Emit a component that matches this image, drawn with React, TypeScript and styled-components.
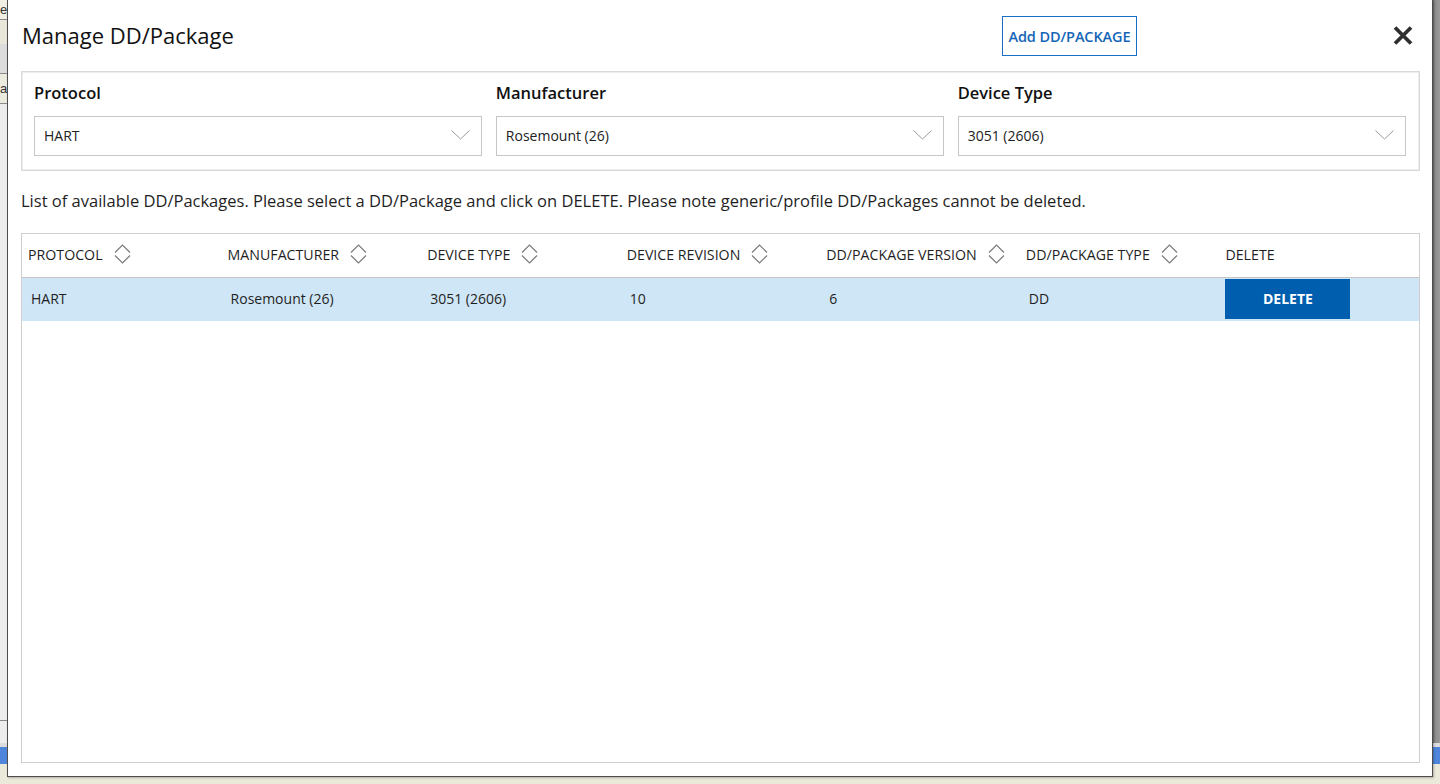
import React from "react";
import styled, { createGlobalStyle } from "styled-components";

const GlobalStyle = createGlobalStyle`
  html, body { margin: 0; padding: 0; }
  body {
    width: 1440px;
    height: 784px;
    overflow: hidden;
    font-family: "Open Sans", "Noto Sans", sans-serif;
    color: #1f1f1f;
  }
  * { box-sizing: border-box; }
`;

const Page = styled.div`
  position: relative;
  width: 1440px;
  height: 784px;
  background: #ebe9da;
  display: flex;
  flex-direction: column;
`;

const BackApp = styled.div`
  height: 743px;
  display: flex;
`;

const BackLeft = styled.div`
  width: 7px;
  background: #ededed;
  display: flex;
  flex-direction: column;
`;

const BackLeftBand = styled.div<{ $h: number; $bg: string; $line?: boolean }>`
  height: ${(p) => p.$h}px;
  background: ${(p) => p.$bg};
  border-bottom: ${(p) => (p.$line ? "1px solid #8a8a8a" : "none")};
  font: 13px "Liberation Sans", sans-serif;
  color: #333;
  line-height: ${(p) => p.$h}px;
  overflow: hidden;
`;

const BackMiddle = styled.div`
  flex: 1;
  background: #ffffff;
`;

const BackRight = styled.div`
  width: 7px;
  background: linear-gradient(90deg, #6e6e6e 0, #8c8c8c 2px, #9a9a9a 100%);
`;

const BackStrip = styled.div`
  height: 4px;
  background: #dcdcdc;
`;

const TaskBar = styled.div`
  height: 17px;
  background: #4f86dc;
`;

const Dialog = styled.div`
  position: absolute;
  left: 7px;
  top: 0;
  width: 1426px;
  height: 777px;
  background: #ffffff;
  border: 1px solid #4d4d4d;
  border-top: none;
  box-shadow: 1px 1px 2px rgba(0, 0, 0, 0.25);
  display: flex;
  flex-direction: column;
  padding: 0 12px 13px 13px;
`;

const Header = styled.div`
  height: 71px;
  display: flex;
  align-items: center;
`;

const Title = styled.h1`
  margin: 0 0 2px 1px;
  font-size: 22px;
  font-weight: 500;
  color: #111;
`;

const AddButton = styled.button`
  margin-left: auto;
  height: 40px;
  width: 135px;
  margin-top: 1px;
  padding: 0;
  background: #fff;
  border: 1px solid #1a6fc2;
  color: #1666b8;
  font-family: "Open Sans", sans-serif;
  font-size: 14.5px;
  font-weight: 600;
  letter-spacing: -0.1px;
`;

const CloseButton = styled.button`
  margin-left: 255px;
  margin-right: 6px;
  width: 22px;
  height: 22px;
  padding: 0;
  border: none;
  background: none;
  display: flex;
  align-items: center;
  justify-content: center;
`;

const FilterBox = styled.div`
  border: 1px solid #d9d9d9;
  box-shadow: inset 0 0 0 1px #ececec;
  padding: 9px 13px 14px 12px;
  display: grid;
  grid-template-columns: repeat(3, 1fr);
  column-gap: 13.5px;
`;

const Field = styled.div`
  display: flex;
  flex-direction: column;
`;

const Label = styled.label`
  font-size: 16.5px;
  font-weight: 600;
  line-height: 24px;
  margin-bottom: 11px;
  color: #111;
`;

const Select = styled.div`
  height: 40px;
  border: 1px solid #c6c6c6;
  display: flex;
  align-items: center;
  justify-content: space-between;
  padding: 0 11px 2px 9px;
  font-size: 14px;
  color: #222;
`;

const InfoText = styled.p`
  margin: 19px 0 21px 0;
  font-size: 16.5px;
  line-height: 22px;
  color: #1f1f1f;
`;

const Table = styled.div`
  flex: 1;
  border: 1px solid #cfcfcf;
  display: flex;
  flex-direction: column;
`;

const Row = styled.div<{ $head?: boolean; $selected?: boolean }>`
  display: grid;
  grid-template-columns: repeat(7, 1fr);
  height: ${(p) => (p.$head ? 44 : 43)}px;
  background: ${(p) => (p.$selected ? "#cfe6f6" : "#fff")};
  border-bottom: ${(p) => (p.$head ? "1px solid #c4c4c4" : "none")};
  align-items: center;
`;

const HeadCell = styled.div`
  display: flex;
  align-items: center;
  gap: 11px;
  padding-left: 6px;
  padding-bottom: 3px;
  font-size: 14.2px;
  color: #1f1f1f;
`;

const Cell = styled.div`
  display: flex;
  align-items: center;
  padding-left: 9px;
  padding-bottom: 2px;
  font-size: 14px;
  color: #1f1f1f;
`;

const DeleteButton = styled.button`
  margin-left: -3px;
  margin-top: 0;
  width: 125px;
  height: 40px;
  border: none;
  background: #005eae;
  color: #fff;
  font-family: "Open Sans", sans-serif;
  font-size: 14px;
  font-weight: 700;
  padding: 0;
`;

const SortIcon = () => (
  <svg width="17" height="22" viewBox="0 0 17 22" fill="none">
    <path d="M1 9.5 L8.5 2 L16 9.5" stroke="#7a7a7a" strokeWidth="1.2" />
    <path d="M1 12.5 L8.5 20 L16 12.5" stroke="#7a7a7a" strokeWidth="1.2" />
  </svg>
);

const Chevron = () => (
  <svg width="19" height="10" viewBox="0 0 19 10" fill="none">
    <path d="M0.5 0.5 L9.5 9 L18.5 0.5" stroke="#9a9a9a" strokeWidth="1" />
  </svg>
);

const CloseIcon = () => (
  <svg width="20" height="19" viewBox="0 0 20 19" fill="none">
    <path d="M2 1.5 L18 17.5 M18 1.5 L2 17.5" stroke="#2e2e2e" strokeWidth="3.8" />
  </svg>
);

const filters = [
  { label: "Protocol", value: "HART" },
  { label: "Manufacturer", value: "Rosemount (26)" },
  { label: "Device Type", value: "3051 (2606)" },
];

const columns = [
  { name: "PROTOCOL", sortable: true },
  { name: "MANUFACTURER", sortable: true },
  { name: "DEVICE TYPE", sortable: true },
  { name: "DEVICE REVISION", sortable: true },
  { name: "DD/PACKAGE VERSION", sortable: true },
  { name: "DD/PACKAGE TYPE", sortable: true },
  { name: "DELETE", sortable: false },
];

const rows = [["HART", "Rosemount (26)", "3051 (2606)", "10", "6", "DD"]];

export default function App() {
  return (
    <>
      <GlobalStyle />
      <Page>
        <BackApp>
          <BackLeft>
            <BackLeftBand $h={20} $bg="#f1efe4" $line>e</BackLeftBand>
            <BackLeftBand $h={24} $bg="#e9e7da" />
            <BackLeftBand $h={30} $bg="#dcdcdc" $line />
            <BackLeftBand $h={30} $bg="#ecebdf" $line>a</BackLeftBand>
            <BackLeftBand $h={617} $bg="#ececec" $line />
          </BackLeft>
          <BackMiddle />
          <BackRight />
        </BackApp>
        <BackStrip />
        <TaskBar />
        <Dialog>
          <Header>
            <Title>Manage DD/Package</Title>
            <AddButton>Add DD/PACKAGE</AddButton>
            <CloseButton aria-label="Close">
              <CloseIcon />
            </CloseButton>
          </Header>
          <FilterBox>
            {filters.map((f) => (
              <Field key={f.label}>
                <Label>{f.label}</Label>
                <Select>
                  <span>{f.value}</span>
                  <Chevron />
                </Select>
              </Field>
            ))}
          </FilterBox>
          <InfoText>
            List of available DD/Packages. Please select a DD/Package and click on DELETE. Please note
            generic/profile DD/Packages cannot be deleted.
          </InfoText>
          <Table>
            <Row $head>
              {columns.map((c) => (
                <HeadCell key={c.name}>
                  {c.name}
                  {c.sortable && <SortIcon />}
                </HeadCell>
              ))}
            </Row>
            {rows.map((r, i) => (
              <Row key={i} $selected>
                {r.map((v, j) => (
                  <Cell key={j}>{v}</Cell>
                ))}
                <Cell>
                  <DeleteButton>DELETE</DeleteButton>
                </Cell>
              </Row>
            ))}
          </Table>
        </Dialog>
      </Page>
    </>
  );
}
